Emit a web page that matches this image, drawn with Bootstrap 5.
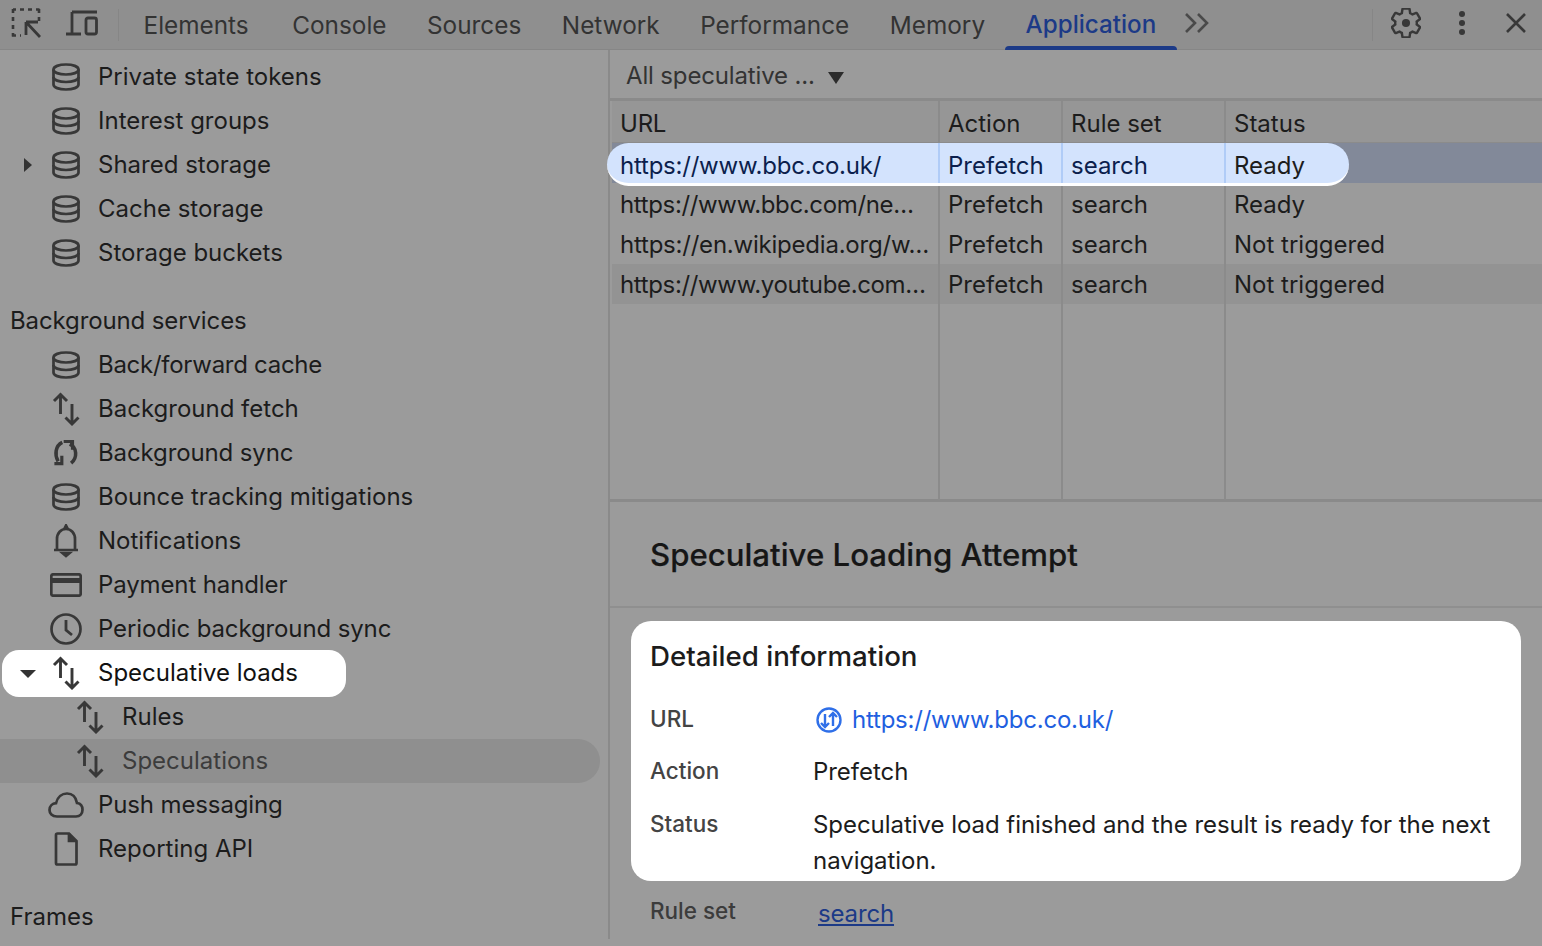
<!doctype html>
<html lang="en"><head><meta charset="utf-8"><title>DevTools</title>
<link href="https://cdn.jsdelivr.net/npm/bootstrap@5.3.0/dist/css/bootstrap.min.css" rel="stylesheet">
<style>
html,body{height:946px;overflow:hidden}
body{background:#9b9b9b;color:#1c1c1c;font-family:Inter,"Liberation Sans",sans-serif;font-size:24px;line-height:1;--bs-body-font-size:24px}
svg{flex:none;display:block}
.ic{fill:none;stroke:#383838;stroke-width:2.7}
.toolstrip{height:50px;background:#8f8f8f;border-bottom:1px solid #868686}
.tool-sep{width:1px;height:32px;background:#868686}
.tab-link{padding:0 20.500px;height:50px;line-height:50px;color:#333;position:relative;font-size:24.350px;margin-right:-.500px}
.tab-link:hover{color:#333}
.tab-first{margin-right:2.500px}
.tab-on{color:#1c3a87;font-weight:500;font-size:24.200px}
.tab-on:hover{color:#1c3a87}
.tab-on::after{content:"";position:absolute;left:0;right:0;bottom:0;height:4px;background:#1c3a87;border-radius:4px 4px 0 0}
.side{width:610px;border-right:2px solid #8a8a8a;padding-top:5px}
.tree-row{height:44px;padding-left:98px;position:relative;display:flex;align-items:center}
.tree-row>svg{position:absolute}
.tree-sub{padding-left:122px}
.tree-head{padding-left:10px}
.tree-on{background:#fff;color:#111;width:344px;margin:-1px 0 -2px 2px;height:47px;padding:0 0 1px 96px;border-radius:17px}
.tree-muted{background:#8f8f8f;color:#3c3c3c;width:600px;border-radius:0 22px 22px 0}
.tight{letter-spacing:-.120px}
.tighter{letter-spacing:-.280px}
.gap-24{height:24px}
.tri-r{position:absolute;left:24px;top:15px;width:0;height:0;border-left:8px solid #333;border-top:7px solid transparent;border-bottom:7px solid transparent}
.tri-d{position:absolute;left:18px;top:20px;width:0;height:0;border-top:8px solid #333;border-left:8px solid transparent;border-right:8px solid transparent}
.main-pane{flex:1;min-width:0}
.pick-bar{height:48px;color:#333;padding:3px 0 0 16px;background:#9b9b9b;letter-spacing:-.150px}
.pick-tri{width:0;height:0;border-top:12px solid #2c2c2c;border-left:8px solid transparent;border-right:8px solid transparent;margin-left:13px;margin-top:4px}
.grid-box{height:404px;border-top:3px solid #8a8a8a;border-bottom:3px solid #8a8a8a;padding-left:2px;background:#9b9b9b}
.g-row{display:flex;height:40px;align-items:stretch;color:#1c1c1c}
.g-head{height:42px;background:#969696;border-bottom:1px solid #8b8b8b}
.g-head .g-cell{padding-top:4px}
.g-alt{background:#939393}
.g-sel{height:40px;background:#828999;margin-bottom:1px;position:relative;z-index:1}
.g-pill{display:flex;margin-left:-5px;width:742px;height:43px;background:#d3e3fd;color:#0c1f4d;border-bottom:3px solid #fff;border-radius:22px;flex:none}
.g-pill .c1{width:333px;padding-left:13px;border-right:2px solid #b0ccf7}
.g-pill .c2,.g-pill .c3{border-right-color:#b0ccf7}
.g-pill>div{display:flex;align-items:center;padding-top:5px}
.g-pill .c4{color:#1c1c1c}
.g-cell{display:flex;align-items:center;padding:2px 0 0 8px;border-right:2px solid #8b8b8b;white-space:nowrap;overflow:hidden}
.c1{width:328px;letter-spacing:-.220px}.c2{width:123px}.c3{width:163px}.c4{flex:1;border-right:0;width:auto}
.g-row .c-tight{letter-spacing:-.350px}
.g-fill{height:196px}
.attempt-head{height:106px;border-bottom:2px solid #8f8f8f;padding:4px 0 0 40px;font-size:31.200px;font-weight:500;color:#161616;-webkit-text-stroke:.2px #161616}
.info-card{margin:13px 21px 0;width:890px;height:260px;background:#fff;border-radius:20px;padding:20px 19px 0;overflow:hidden;position:relative;z-index:1}
.info-title{font-size:27.700px;font-weight:500;color:#1c1c1c;margin:0 0 31px;line-height:30px}
.kv{display:flex}
.kv-k{width:163px;flex:none;color:#444;font-size:22.500px;font-weight:500;line-height:34px}
.kv-v{line-height:36px;color:#1c1c1c;letter-spacing:-.045px}
.url-a{color:#1f5fe0;text-decoration:none;letter-spacing:-.220px}
.rule-a{color:#1c3a87;margin-top:2px;letter-spacing:-.150px}
.rule-line{padding:19px 0 0 40px;display:flex;align-items:flex-start}
.rule-k{width:168px;font-size:22.500px;font-weight:500;color:#3c3c3c}
</style></head><body>
<svg width="0" height="0" class="position-absolute">
<symbol id="db" viewBox="0 0 28 28"><path d="M1.500 6.500C1.500 3.500 7 1.500 14 1.500s12.500 2 12.500 5v15c0 3-5.500 5-12.500 5s-12.500-2-12.500-5z"/><path d="M1.500 6.500c0 3 5.500 5 12.500 5s12.500-2 12.500-5M1.500 14c0 3 5.500 5 12.500 5s12.500-2 12.500-5"/></symbol>
<symbol id="ud" viewBox="0 0 28 34"><path d="M8.500 22V2.500M2 9l6.500-6.500L15 9M20 12v20M13.500 25.500 20 32l6.500-6.500" stroke-width="2.900"/></symbol>
<symbol id="sy" viewBox="0 0 28 28"><path d="M10 2.500C2.500 6 1.500 16 5.500 23M18 4.500C26 8 26.500 19 19.500 25" stroke-width="3.800"/><path d="M1.500 25.500h8V17M11.500 1.500h9.500v9" fill="none" stroke-width="3.400"/></symbol>
<symbol id="bell" viewBox="0 0 28 34"><path d="M2 26h24M5 26V15c0-6 4-10 9-10s9 4 9 10v11"/><path d="M12.500 4.500 14 1.500l1.500 3zM10.500 29h7l-3.500 3z" fill="#383838"/></symbol>
<symbol id="card" viewBox="0 0 32 24"><rect x="1.300" y="1.300" width="29.400" height="21.400" rx="2"/><path d="M1 7.500h30" stroke-width="5"/></symbol>
<symbol id="clk" viewBox="0 0 32 32"><circle cx="16" cy="16" r="14.500"/><path d="M16 7v10l6 5" stroke-width="2.800"/></symbol>
<symbol id="cld" viewBox="0 0 36 26"><path d="M9 24.500C4 24.500 1.500 21.500 1.500 18c0-4 3-6.500 6.500-6.800C9.500 5 14 1.500 19 1.500c5.500 0 9 4 10 9.500 3.500.5 5.500 3 5.500 6.800 0 4-2.500 6.700-6.500 6.700z"/></symbol>
<symbol id="doc" viewBox="0 0 24 34"><path d="M2 3a1.500 1.500 0 0 1 1.500-1.500H15L22.500 9v22a1.500 1.500 0 0 1-1.500 1.500H3.500A1.500 1.500 0 0 1 2 31z"/><path d="M15 1.500V9h7.500" fill="#383838"/></symbol>
</svg>

<header class="toolstrip d-flex align-items-center position-relative">
 <svg class="ic" style="margin-left:11px;margin-top:-4px" width="30" height="30" viewBox="0 0 30 30"><path d="M2 1.500h3M9 1.500h4M17 1.500h4M25 1.500h3.500M28 1v4M28 9v4M2 1v4M2 9v4M2 17v4M2 25v3.500M1 27.500h4M9 27.500h1" stroke-width="2.600"/><path d="M15 14h12M15 14v13M15 14l14 15" stroke-width="2.800"/></svg>
 <svg class="ic" style="margin-left:25px;margin-top:-4px" width="32" height="26" viewBox="0 0 32 26"><path d="M6 2h25M6 2v21M0 24h15" stroke-width="2.800"/><rect x="20" y="8" width="10.500" height="16" rx="2" stroke-width="2.800"/></svg>
 <span class="tool-sep" style="margin-left:20px"></span>
 <nav class="nav flex-nowrap" style="margin-left:4px">
  <a class="nav-link tab-link tab-first" href="#">Elements</a><a class="nav-link tab-link" href="#">Console</a><a class="nav-link tab-link" href="#">Sources</a><a class="nav-link tab-link" href="#">Network</a><a class="nav-link tab-link" href="#">Performance</a><a class="nav-link tab-link" href="#">Memory</a><a class="nav-link tab-link tab-on" href="#">Application</a>
 </nav>
 <svg class="ic" style="margin-left:8px;margin-top:-4px" width="26" height="22" viewBox="0 0 26 22"><path d="M2 2l9 9-9 9M14 2l9 9-9 9" stroke="#4a4a4a" stroke-width="2.600"/></svg>
 <span class="tool-sep ms-auto" style="margin-right:18px"></span>
 <svg class="ic" style="margin-top:-4px" width="30" height="30" viewBox="2 2 20 20"><path stroke-width="1.600" d="M19.140 12.940c.04-.3.06-.61.06-.94 0-.32-.02-.64-.07-.94l2.030-1.580c.18-.14.23-.41.12-.61l-1.920-3.320c-.12-.22-.37-.29-.59-.22l-2.390.96c-.5-.38-1.030-.7-1.620-.94l-.36-2.540c-.04-.24-.24-.41-.48-.41h-3.840c-.24 0-.43.17-.47.41l-.36 2.540c-.59.24-1.130.57-1.620.94l-2.390-.96c-.22-.08-.47 0-.59.22L2.740 8.870c-.12.21-.08.47.12.61l2.030 1.580c-.05.3-.09.63-.09.94s.02.64.07.94l-2.030 1.580c-.18.14-.23.41-.12.61l1.920 3.320c.12.22.37.29.59.22l2.390-.96c.5.38 1.030.7 1.620.94l.36 2.540c.05.24.24.41.48.41h3.840c.24 0 .44-.17.47-.41l.36-2.540c.59-.24 1.130-.56 1.620-.94l2.390.96c.22.08.47 0 .59-.22l1.920-3.320c.12-.22.07-.47-.12-.61l-2.010-1.580z"/><circle cx="12" cy="12" r="2.700" fill="#383838" stroke="none"/></svg>
 <svg style="margin-left:37px;margin-top:-4px" width="8" height="26" viewBox="0 0 8 26"><circle cx="4" cy="4" r="3" fill="#383838"/><circle cx="4" cy="13" r="3" fill="#383838"/><circle cx="4" cy="22" r="3" fill="#383838"/></svg>
 <svg class="ic" style="margin-left:39px;margin-right:15px;margin-top:-4px" width="22" height="22" viewBox="0 0 22 22"><path d="M2 2l18 18M20 2 2 20" stroke-width="2.600"/></svg>
</header>

<div class="d-flex">
 <aside class="side flex-none">
  <div class="tree-row"><svg class="ic" style="left:52px;top:8px" width="28" height="28"><use href="#db"/></svg>Private state tokens</div>
  <div class="tree-row"><svg class="ic" style="left:52px;top:8px" width="28" height="28"><use href="#db"/></svg>Interest groups</div>
  <div class="tree-row"><span class="tri-r"></span><svg class="ic" style="left:52px;top:8px" width="28" height="28"><use href="#db"/></svg>Shared storage</div>
  <div class="tree-row"><svg class="ic" style="left:52px;top:8px" width="28" height="28"><use href="#db"/></svg>Cache storage</div>
  <div class="tree-row"><svg class="ic" style="left:52px;top:8px" width="28" height="28"><use href="#db"/></svg>Storage buckets</div>
  <div class="gap-24"></div>
  <div class="tree-row tree-head tight">Background services</div>
  <div class="tree-row tighter"><svg class="ic" style="left:52px;top:8px" width="28" height="28"><use href="#db"/></svg>Back/forward cache</div>
  <div class="tree-row"><svg class="ic" style="left:52px;top:5px" width="28" height="34"><use href="#ud"/></svg>Background fetch</div>
  <div class="tree-row tight"><svg class="ic" style="left:53px;top:9px" width="26" height="26"><use href="#sy"/></svg>Background sync</div>
  <div class="tree-row"><svg class="ic" style="left:52px;top:8px" width="28" height="28"><use href="#db"/></svg>Bounce tracking mitigations</div>
  <div class="tree-row"><svg class="ic" style="left:52px;top:5px" width="28" height="34"><use href="#bell"/></svg>Notifications</div>
  <div class="tree-row tight"><svg class="ic" style="left:50px;top:10px" width="32" height="24"><use href="#card"/></svg>Payment handler</div>
  <div class="tree-row tight"><svg class="ic" style="left:50px;top:6px" width="32" height="32"><use href="#clk"/></svg>Periodic background sync</div>
  <div class="tree-row tree-on"><span class="tri-d"></span><svg class="ic" style="left:50px;top:6px" width="28" height="34"><use href="#ud"/></svg>Speculative loads</div>
  <div class="tree-row tree-sub"><svg class="ic" style="left:76px;top:5px" width="28" height="34"><use href="#ud"/></svg>Rules</div>
  <div class="tree-row tree-sub tree-muted"><svg class="ic" style="left:76px;top:5px" width="28" height="34"><use href="#ud"/></svg>Speculations</div>
  <div class="tree-row tight"><svg class="ic" style="left:48px;top:9px" width="36" height="26"><use href="#cld"/></svg>Push messaging</div>
  <div class="tree-row"><svg class="ic" style="left:54px;top:5px" width="24" height="34"><use href="#doc"/></svg>Reporting API</div>
  <div class="gap-24"></div>
  <div class="tree-row tree-head">Frames</div>
 </aside>

 <main class="main-pane">
  <div class="pick-bar d-flex align-items-center">All speculative ...<span class="pick-tri"></span></div>
  <div class="grid-box">
   <div class="g-row g-head"><div class="g-cell c1">URL</div><div class="g-cell c2">Action</div><div class="g-cell c3">Rule set</div><div class="g-cell c4">Status</div></div>
   <div class="g-row g-sel"><div class="g-pill"><div class="c1">https://www.bbc.co.uk/</div><div class="g-cell c2">Prefetch</div><div class="g-cell c3">search</div><div class="c4 ps-2">Ready</div></div></div>
   <div class="g-row"><div class="g-cell c1 c-tight">https://www.bbc.com/ne…</div><div class="g-cell c2">Prefetch</div><div class="g-cell c3">search</div><div class="g-cell c4">Ready</div></div>
   <div class="g-row"><div class="g-cell c1">https://en.wikipedia.org/w…</div><div class="g-cell c2">Prefetch</div><div class="g-cell c3">search</div><div class="g-cell c4">Not triggered</div></div>
   <div class="g-row g-alt"><div class="g-cell c1 c-tight">https://www.youtube.com…</div><div class="g-cell c2">Prefetch</div><div class="g-cell c3">search</div><div class="g-cell c4">Not triggered</div></div>
   <div class="g-row g-fill"><div class="g-cell c1"></div><div class="g-cell c2"></div><div class="g-cell c3"></div><div class="g-cell c4"></div></div>
  </div>
  <div class="attempt-head d-flex align-items-center">Speculative Loading Attempt</div>
  <section class="info-card">
   <h2 class="info-title">Detailed information</h2>
   <div class="kv" style="height:52px"><div class="kv-k">URL</div><div class="kv-v d-flex"><svg width="28" height="28" viewBox="0 0 28 28" style="margin:4px 9px 0 2px" fill="none" stroke="#2f6fe8"><circle cx="14" cy="14" r="11.500" stroke-width="2.400"/><path d="M10 8v13M6 17l4 4 4-4M18 20V7M14 11l4-4 4 4" stroke-width="2.400"/></svg><a class="url-a" href="#">https://www.bbc.co.uk/</a></div></div>
   <div class="kv" style="height:53px"><div class="kv-k">Action</div><div class="kv-v">Prefetch</div></div>
   <div class="kv"><div class="kv-k">Status</div><div class="kv-v">Speculative load finished and the result is ready for the next navigation.</div></div>
  </section>
  <div class="rule-line"><span class="rule-k">Rule set</span><a class="rule-a" href="#">search</a></div>
 </main>
</div>
<script src="https://cdn.jsdelivr.net/npm/bootstrap@5.3.0/dist/js/bootstrap.bundle.min.js"></script>
</body></html>
